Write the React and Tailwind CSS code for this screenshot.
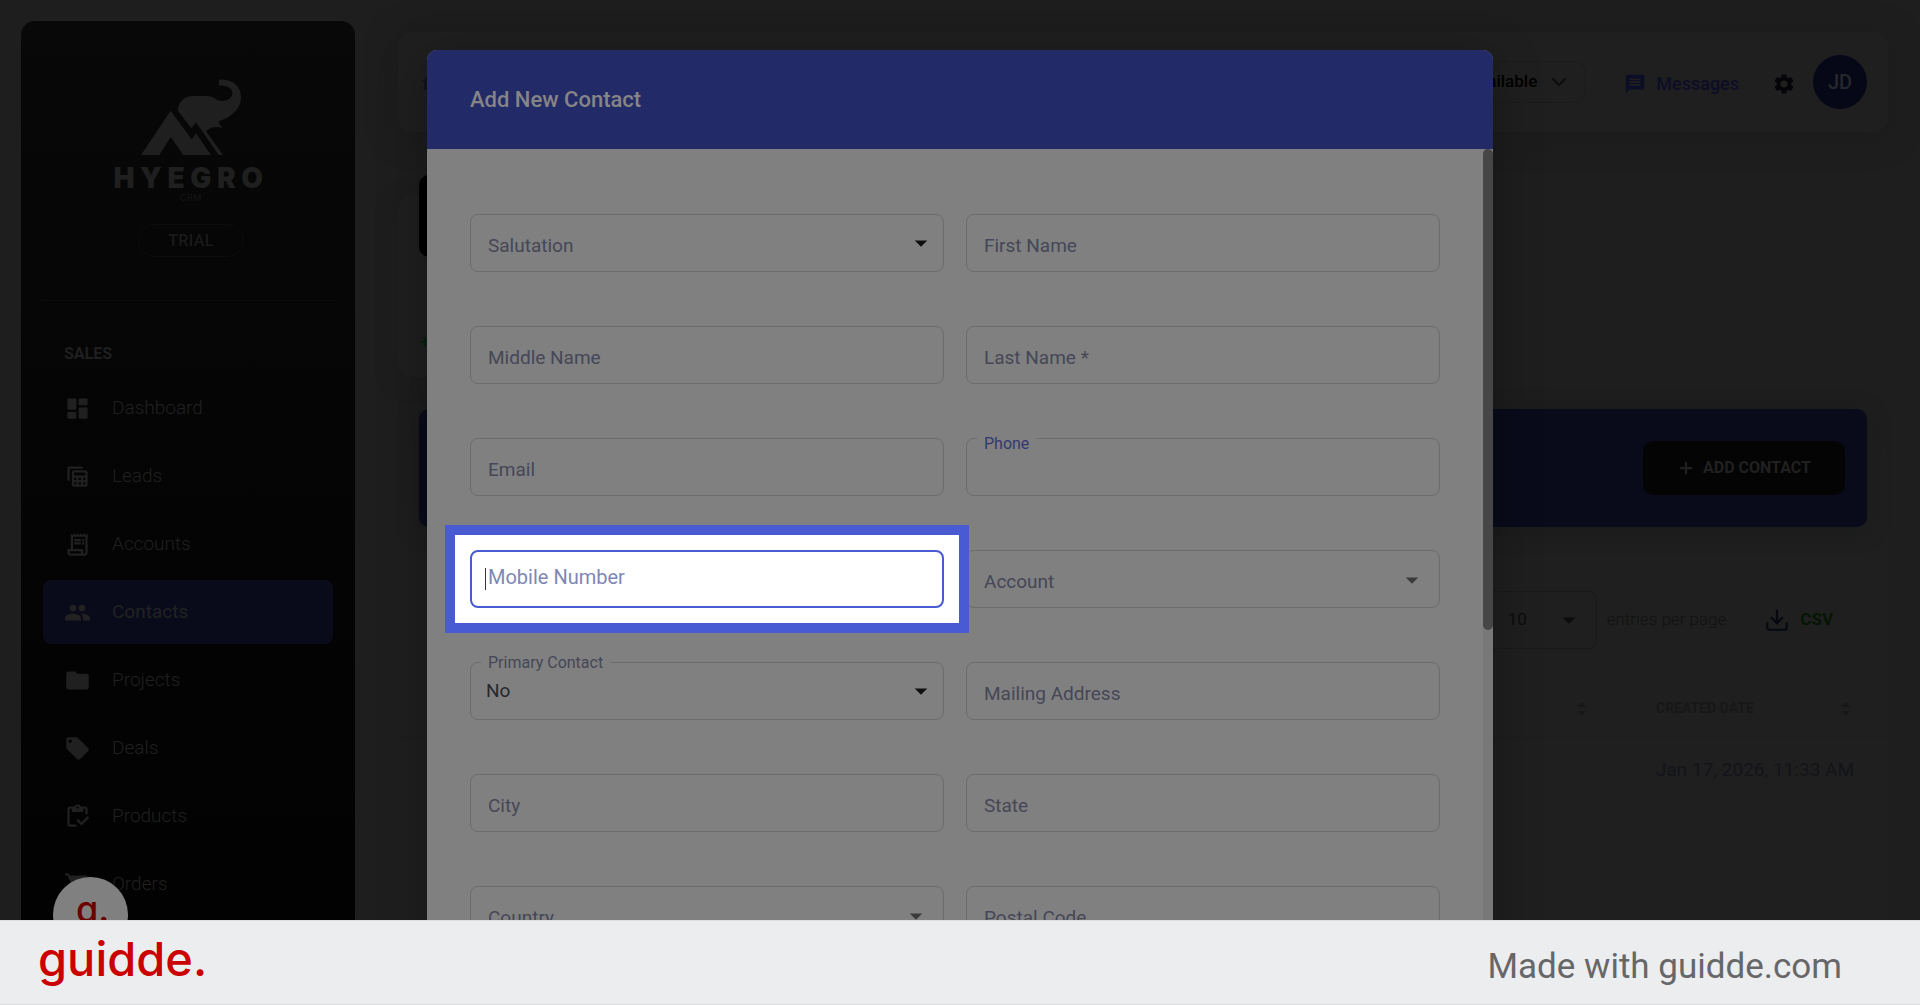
import React from "react";
import {
  MdArrowDropDown,
  MdFolder,
  MdHome,
  MdLocalOffer,
  MdMessage,
  MdOutlineInventory,
  MdOutlineReceiptLong,
  MdPeople,
  MdSettings,
  MdShoppingCart,
} from "react-icons/md";
import { FiChevronDown, FiDownload, FiPlus } from "react-icons/fi";

function DashboardIcon({ className }) {
  return (
    <svg viewBox="0 0 24 24" fill="currentColor" className={className}>
      <rect x="3" y="3" width="8" height="10" rx="1" />
      <rect x="3" y="15" width="8" height="6" rx="1" />
      <rect x="13" y="3" width="8" height="6" rx="1" />
      <rect x="13" y="11" width="8" height="10" rx="1" />
    </svg>
  );
}

function LeadsIcon({ className }) {
  return (
    <svg viewBox="0 0 24 24" fill="currentColor" className={className}>
      <path d="M5 3h10a2 2 0 0 1 2 2H5v11a2 2 0 0 1-2-2V5a2 2 0 0 1 2-2z" />
      <path
        fillRule="evenodd"
        d="M9 6.500h10a2 2 0 0 1 2 2V19a2 2 0 0 1-2 2H9a2 2 0 0 1-2-2V8.500a2 2 0 0 1 2-2zM9 8.500V11h10V8.500zM9 13v2h2v-2zm4 0v2h2v-2zm4 0v2h2v-2zM9 17v2h2v-2zm4 0v2h2v-2zm4 0v2h2v-2z"
      />
    </svg>
  );
}

const navItems = [
  { label: "Dashboard", icon: DashboardIcon },
  { label: "Leads", icon: LeadsIcon },
  { label: "Accounts", icon: MdOutlineReceiptLong },
  { label: "Contacts", icon: MdPeople, active: true },
  { label: "Projects", icon: MdFolder },
  { label: "Deals", icon: MdLocalOffer },
  { label: "Products", icon: MdOutlineInventory },
  { label: "Orders", icon: MdShoppingCart },
];

const fields = [
  { id: "salutation", label: "Salutation", type: "select" },
  { id: "firstName", label: "First Name" },
  { id: "middleName", label: "Middle Name" },
  { id: "lastName", label: "Last Name *" },
  { id: "email", label: "Email" },
  { id: "phone", label: "Phone", leaving: true },
  { id: "mobile", label: "Mobile Number", focused: true },
  { id: "account", label: "Account", type: "combo" },
  { id: "primary", label: "Primary Contact", type: "select", value: "No" },
  { id: "mailing", label: "Mailing Address" },
  { id: "city", label: "City" },
  { id: "state", label: "State" },
  { id: "country", label: "Country", type: "combo" },
  { id: "postal", label: "Postal Code" },
];

function Logo() {
  return (
    <div className="flex flex-col items-center text-[#1f1f1f]">
      <svg viewBox="420 235 306 232" fill="currentColor" className="h-[78px] w-[102px]">
        <path d="M423 465 512 332l63 86 13-18 45 65h-83l-38-54-34 54z" />
        <path d="M657 239c43-4 66 23 66 53 0 33-24 57-66 72-1 8 5 14 11 21-18-7-34-4-50 8l51 72h-13l-68-98-14 18-40-52c0-28 20-45 44-45h42c23 0 27 15 46 15 18 0 31-10 31-23 0-15-16-25-40-23z" />
      </svg>
      <div className="mt-1 font-['Inter'] text-[28px] leading-9 font-black tracking-[0.2em]">
        HYEGRO
      </div>
      <div className="-mt-1 font-['Inter'] text-[9px] leading-3 tracking-wider text-[#161616]">
        CRM
      </div>
    </div>
  );
}

function Sidebar() {
  return (
    <aside className="mt-[21px] ml-[21px] flex w-[334px] shrink-0 flex-col overflow-hidden rounded-t-[14px] bg-linear-to-b from-[#080808] to-[#020202]">
      <div className="flex flex-col items-center pt-[57px] pl-[6px]">
        <Logo />
        <div className="mt-5 flex h-[33px] w-[106px] items-center justify-center rounded-full border border-[#0d0d0d] text-base font-medium tracking-wide text-[#1a1a1a]">
          TRIAL
        </div>
      </div>
      <hr className="mx-5 mt-[43px] border-[#0b0b0b]" />
      <nav className="mt-[43px] px-[22px]">
        <h3 className="px-[21px] text-base leading-5 font-bold text-[#1f1f1f]">SALES</h3>
        <ul className="mt-3 flex flex-col gap-1">
          {navItems.map(({ label, icon: Icon, active }) => (
            <li key={label}>
              <a
                href="#"
                className={
                  active
                    ? "flex h-16 items-center gap-[21px] rounded-lg bg-[#090b1a] pl-[21px] text-[19px] text-[#222222]"
                    : "flex h-16 items-center gap-[21px] rounded-lg pl-[21px] text-[19px] font-light text-[#202020]"
                }
              >
                <Icon className="size-[27px]" />
                {label}
              </a>
            </li>
          ))}
        </ul>
      </nav>
    </aside>
  );
}

function TopBar() {
  return (
    <header className="flex h-[100px] shrink-0 items-center rounded-[14px] bg-[#1f1f1f] px-[21px] shadow-[0_4px_30px_#1c1c1c]">
      <MdHome className="size-6 text-[#141414]" />
      <div className="ml-auto flex items-center">
        <button className="flex h-[42px] w-[170px] items-center justify-end gap-[10px] rounded-xl border border-[#1b1b1b] pr-[14px] text-[17px] font-medium text-black">
          Available
          <FiChevronDown className="size-6 text-[#0c0c0c]" />
        </button>
        <button className="ml-[38px] flex items-center gap-[10px] pt-[3px] text-[18px] font-medium text-[#0c0d26]">
          <MdMessage className="size-[22px]" />
          Messages
        </button>
        <button aria-label="Settings" className="ml-[33px] pt-[3px] text-[#050509]">
          <MdSettings className="size-6" />
        </button>
        <div className="ml-[17px] flex size-[54px] items-center justify-center rounded-full bg-[#060818] text-xl font-medium text-[#26272d]">
          JD
        </div>
      </div>
    </header>
  );
}

function SortIcon() {
  return (
    <svg viewBox="0 0 8 14" fill="currentColor" className="ml-auto h-[14px] w-2">
      <path d="M4 0l4 5H0zM4 14l4-5H0z" />
    </svg>
  );
}

function ContactsTable() {
  return (
    <section className="mt-16 flex-1 rounded-t-[14px] bg-[#1f1f1f]">
      <div className="relative mx-[21px] -mt-8 flex h-[118px] items-center justify-end rounded-[10px] bg-[#090b1b] pr-[22px] shadow-[0_4px_20px_#1a1b1b]">
        <button className="flex h-[54px] w-[202px] items-center justify-center gap-2 rounded-[10px] bg-[#040404] text-base font-bold text-[#202020]">
          <FiPlus className="size-[18px]" strokeWidth={3} />
          ADD CONTACT
        </button>
      </div>

      <div className="mt-16 flex h-[58px] items-center justify-end pr-[55px] text-[17px]">
        <div className="relative">
          <select
            id="pageSize"
            className="h-[58px] w-[122px] appearance-none rounded-lg border border-[#191919] pl-8 text-[#0c0c0c]"
          >
            <option>10</option>
          </select>
          <MdArrowDropDown className="pointer-events-none absolute top-[14px] right-[13px] size-[30px] text-[#0c0c0c]" />
        </div>
        <label htmlFor="pageSize" className="ml-[10px] font-light text-[#121212]">
          entries per page
        </label>
        <button className="ml-[38px] flex items-center gap-[10px] font-bold text-[#041504]">
          <FiDownload className="size-[26px] text-[#060912]" />
          CSV
        </button>
      </div>

      <table className="mt-8 w-full text-left">
        <thead>
          <tr className="h-14 border-b border-[#1c1c1c] text-[14px] text-[#171717]">
            <th className="pr-[38px]">
              <SortIcon />
            </th>
            <th className="w-[264px] pr-[38px] pl-8">
              <div className="flex items-center">
                CREATED DATE
                <SortIcon />
              </div>
            </th>
          </tr>
        </thead>
        <tbody>
          <tr className="h-[66px] text-[19px] text-[#131419]">
            <td />
            <td className="pl-8 whitespace-nowrap">Jan 17, 2026, 11:33 AM</td>
          </tr>
        </tbody>
      </table>
    </section>
  );
}

function Field({ id, label, type, value, leaving, focused }) {
  let labelClass = "top-[20px] left-[18px] text-[19px] leading-6 text-[#454757]";
  if (value) labelClass = "top-[-9px] left-[11px] bg-[#808080] px-[7px] text-base leading-5 text-[#454757]";
  if (leaving) labelClass = "top-[-4px] left-[11px] bg-[#808080] px-[7px] text-base leading-5 text-[#33396f]";
  if (focused) labelClass = "top-[15px] left-[18px] text-[20px] leading-6 text-[#7e86b6]";

  return (
    <div className="relative">
      {/* Spotlight around the current step */}
      {focused && (
        <div className="absolute -inset-[25px] z-10 border-10 border-[#485bd2] bg-white" />
      )}
      <div className={focused ? "relative z-20" : "relative"}>
        {type === "select" ? (
          <select
            id={id}
            className="block h-[58px] w-full appearance-none rounded-lg border border-[#6c6c6c] px-[15px] text-[19px] text-[#26282b]"
          >
            <option>{value}</option>
          </select>
        ) : (
          <input
            id={id}
            type="text"
            className={
              focused
                ? "block h-[58px] w-full rounded-lg border-2 border-[#485bd2] bg-white px-4 outline-none"
                : "block h-[58px] w-full rounded-lg border border-[#6c6c6c] px-4"
            }
          />
        )}
        <label htmlFor={id} className={`pointer-events-none absolute ${labelClass}`}>
          {label}
        </label>
        {focused && <span className="absolute top-[18px] left-[15px] h-[22px] w-px bg-[#2f3440]" />}
        {type === "select" && (
          <MdArrowDropDown className="pointer-events-none absolute top-[14px] right-2 size-[30px] text-[#101010]" />
        )}
        {type === "combo" && (
          <MdArrowDropDown className="pointer-events-none absolute top-[15px] right-[13px] size-[30px] text-[#3b3b3b]" />
        )}
      </div>
    </div>
  );
}

function AddContactModal() {
  return (
    <div
      role="dialog"
      aria-labelledby="modalTitle"
      className="w-full max-w-[1066px] self-start overflow-hidden rounded-t-[10px] bg-[#808080] shadow-[0_12px_50px_rgba(0,0,0,0.3)]"
    >
      <div className="flex h-[99px] items-center bg-[#232a68] px-[43px]">
        <h2 id="modalTitle" className="text-[22px] font-medium text-[#858585]">
          Add New Contact
        </h2>
      </div>
      <div className="flex">
        <form className="grid flex-1 grid-cols-2 gap-x-[22px] gap-y-[54px] px-[43px] py-[65px]">
          {fields.map((field) => (
            <Field key={field.id} {...field} />
          ))}
        </form>
        <div className="w-[10px] bg-[#787878]">
          <div className="h-[481px] rounded-full bg-[#464646]" />
        </div>
      </div>
    </div>
  );
}

export default function App() {
  return (
    <div className="flex h-screen flex-col overflow-hidden bg-[#1e1e1e] font-['Roboto',sans-serif]">
      <div className="relative flex min-h-0 flex-1 overflow-hidden">
        <Sidebar />
        <main className="flex min-w-0 flex-1 flex-col pt-8 pr-8 pl-[43px]">
          <TopBar />
          <section className="mt-[63px] h-[182px] w-1/4 shrink-0 rounded-[14px] bg-[#1f1f1f] px-[21px] shadow-[0_4px_20px_#1c1c1c]">
            <div className="relative -top-5 size-[82px] rounded-[10px] bg-black" />
            <FiPlus className="mt-[59px] size-3 text-[#04200a]" strokeWidth={4} />
          </section>
          <ContactsTable />
        </main>

        <div className="absolute inset-0 flex justify-center pt-[50px]">
          <AddContactModal />
        </div>

        {/* Floating guide launcher */}
        <button
          aria-label="Open guide"
          className="absolute -bottom-8 left-[53px] flex size-[75px] justify-center rounded-full bg-[#808080] pt-[10px] pl-1 font-['Inter'] text-[36px] leading-[44px] font-medium text-[#6b0000]"
        >
          g.
        </button>
      </div>

      <footer className="flex h-[85px] shrink-0 items-center justify-between border-y border-[#dcdddf] bg-[#ecedef] pr-[78px] pl-[38px]">
        <a href="#" className="pb-2 font-['Inter'] text-[47px] leading-[60px] font-medium text-[#cb0000]">
          guidde.
        </a>
        <span className="pt-2 text-[35px] leading-10 text-[#666768]">Made with guidde.com</span>
      </footer>
    </div>
  );
}
